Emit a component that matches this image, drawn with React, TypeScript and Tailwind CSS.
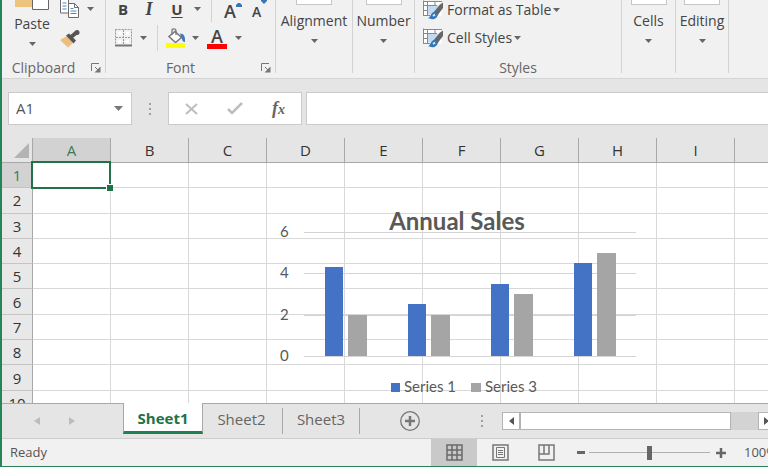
import React, { useState } from 'react';

const COLUMNS = ['A', 'B', 'C', 'D', 'E', 'F', 'G', 'H', 'I', 'J', 'K', 'L'];
const ROWS = [1, 2, 3, 4, 5, 6, 7, 8, 9, 10];

const SALES = [
  { first: 4.3, third: 2 },
  { first: 2.5, third: 2 },
  { first: 3.5, third: 3 },
  { first: 4.5, third: 5 },
];

const Caret: React.FC<{ className?: string }> = ({ className = '' }) => (
  <svg className={`shrink-0 ${className}`} width="7" height="4" viewBox="0 0 7 4" fill="#666">
    <path d="M0 0h7L3.5 4z" />
  </svg>
);

const PasteIcon = () => (
  <svg width="36" height="10" viewBox="0 0 36 10">
    <path d="M1 0h17v7H1z" fill="#ecc47e" />
    <path d="M18.5-2h16V9.5h-16z" fill="#fff" stroke="#666" />
  </svg>
);

const CopyIcon = () => (
  <svg width="19" height="18" viewBox="0 0 19 18" fill="#fff" stroke="#6b6b6b">
    <path d="M.5-2h8v15h-8z" />
    <path d="M2.5 3h4M2.5 6h4M2.5 9h4" stroke="#4a86c8" />
    <path d="M8.500 3.500h6l4 4v10h-10z" />
    <path d="M14.500 3.500v4h4" fill="none" />
    <path d="M10.500 8.500h3M10.500 11h6M10.500 13.500h6" stroke="#4a86c8" />
  </svg>
);

const PainterIcon = () => (
  <svg width="20" height="18" viewBox="0 0 20 18">
    <path d="M0 10 7 6l6 7-5 4.500z" fill="#ecbf7c" />
    <path d="m6 5.500 3-2 7 7-2.500 3z" fill="#555" />
    <path d="m11 7 5.500-4.500" stroke="#555" strokeWidth="4" />
    <circle cx="17" cy="2.500" r="2.500" fill="#555" />
  </svg>
);

const LauncherIcon = () => (
  <svg width="10" height="10" viewBox="0 0 10 10" fill="none" stroke="#777">
    <path d="M.5 8V.5H8" />
    <path d="m4 4 4 4" />
    <path d="M9.500 3.500v6h-6z" fill="#777" stroke="none" />
  </svg>
);

const BordersIcon = () => (
  <svg width="17" height="18" viewBox="0 0 17 18" fill="none" stroke="#999">
    <path d="M.5.5h16v15M.5.5v15M8.500 1v15M1 8.500h15" strokeDasharray="2 1" />
    <path d="M3 3h3v3H3zM11 3h3v3h-3zM3 11h3v3H3zM11 11h3v3h-3z" fill="#fff" stroke="none" />
    <path d="M0 16.500h17" stroke="#777" strokeWidth="2" />
  </svg>
);

const FillIcon = () => (
  <svg width="20" height="20" viewBox="0 0 20 20" fill="none">
    <path d="m9 3.500 6.500 6-6 5-6.500-6z" fill="#fff" stroke="#777" strokeWidth="1.500" />
    <path d="M6 7V2.500Q6 .8 7.800.8T10 2.500V7" stroke="#777" strokeWidth="1.300" />
    <path d="M14 5.500c4 0 5.500 3 5 8.500-1.500 0-3-1-3-3z" fill="#3d7ab8" />
    <path d="M0 15h19v5H0z" fill="#ff0" />
  </svg>
);

const StylesIcon = () => (
  <svg width="20" height="20" viewBox="0 0 20 20" fill="none">
    <path d="M.5 1.500h18v14H.5z" fill="#fff" />
    <path d="M5 5.500h11v9H5z" fill="#c3daf0" />
    <path d="M.5.500v15.500M4.500 1v15M12 1v5M0 1.500h19M0 5.500h14M0 10.500h5M0 15.500h7" stroke="#888" />
    <path d="m10 13 7-8.500 3-2V8l-6 8z" fill="#666" />
    <path d="M5 18c3 0 2-6 7-6 3 1 3.500 4 1 6-2 1.700-6 1.500-8 0z" fill="#3576b7" />
    <path d="m10 16 2-1.500" stroke="#d8e8f6" strokeWidth="2" />
  </svg>
);

const Group: React.FC<{ label?: string; launcher?: boolean; width: string; children: React.ReactNode }> = ({
  label,
  launcher,
  width,
  children,
}) => (
  <>
    <section className={`flex shrink-0 flex-col ${width}`}>
      <div className="h-[60px]">{children}</div>
      {label && (
        <div className="flex items-center text-sm leading-4 text-[#666]">
          <span className={`flex-1 text-center ${launcher ? 'pr-1.5' : ''}`}>{label}</span>
          {launcher && (
            <button className="mr-1" aria-label={`${label} settings`}>
              <LauncherIcon />
            </button>
          )}
        </div>
      )}
    </section>
    <div className="h-[73px] w-px shrink-0 bg-[#d2d2d2]" />
  </>
);

const CollapsedGroup: React.FC<{ label: string; width: string }> = ({ label, width }) => (
  <Group width={width}>
    <button className="flex w-full flex-col items-center">
      <span className="h-[5px] w-9 border border-t-0 border-[#c6c6c6] bg-white" />
      <span className="mt-2 leading-4">{label}</span>
      <Caret className="mt-2.5" />
    </button>
  </Group>
);

const Ribbon = () => (
  <header className="flex h-[79px] shrink-0 overflow-hidden border-b border-[#d4d4d4] bg-[#f1f1f1] text-sm">
    <Group label="Clipboard" launcher width="w-[103px]">
      <div className="flex">
        <button className="ml-2 flex w-11 flex-col items-center">
          <PasteIcon />
          <span className="mt-1.5 leading-4">Paste</span>
          <Caret className="mt-2.5" />
        </button>
        <div className="ml-1.5 flex flex-col gap-3">
          <button className="flex items-center gap-2" aria-label="Copy">
            <CopyIcon />
            <Caret />
          </button>
          <button aria-label="Format Painter">
            <PainterIcon />
          </button>
        </div>
      </div>
    </Group>
    <Group label="Font" launcher width="w-[169px]">
      <div className="flex h-[22px] items-center pl-2">
        <button className="w-[18px] pb-1 text-[15px] font-bold leading-4">B</button>
        <button className="ml-2 w-[18px] pb-1 font-['Liberation_Serif',serif] text-lg font-bold italic leading-4">I</button>
        <button className="ml-2.5 w-[18px] pb-1 text-[15px] font-bold leading-4 underline underline-offset-2">U</button>
        <Caret className="mb-1 ml-2" />
        <div className="ml-2.5 h-[22px] w-px bg-[#d2d2d2]" />
        <button className="ml-3 flex" aria-label="Increase font size">
          <span className="text-lg font-semibold leading-4">A</span>
          <svg width="6" height="4" viewBox="0 0 6 4" fill="#3576b7">
            <path d="M0 4V2l3-3 3 3v2z" />
          </svg>
        </button>
        <button className="ml-2.5 flex" aria-label="Decrease font size">
          <span className="pt-0.5 text-sm font-semibold leading-5">A</span>
          <svg width="6" height="4" viewBox="0 0 6 4" fill="#3576b7">
            <path d="M0 0h6v1L3 4 0 1z" />
          </svg>
        </button>
      </div>
      <div className="flex h-[30px] items-center pl-[9px] pt-0.5">
        <button className="flex items-center gap-2" aria-label="Borders">
          <BordersIcon />
          <Caret />
        </button>
        <div className="ml-2.5 h-[26px] w-px bg-[#d2d2d2]" />
        <button className="ml-2 flex items-center gap-1.5" aria-label="Fill color">
          <FillIcon />
          <Caret />
        </button>
        <button className="ml-2 flex items-center gap-2" aria-label="Font color">
          <span className="w-5 border-b-[5px] border-[#f00] text-center text-lg font-semibold leading-4">A</span>
          <Caret />
        </button>
      </div>
    </Group>
    <CollapsedGroup label="Alignment" width="w-[76px]" />
    <CollapsedGroup label="Number" width="w-[61px]" />
    <Group label="Styles" width="w-[206px]">
      <div className="flex flex-col items-start gap-2 pl-2">
        <button className="flex h-5 items-center">
          <StylesIcon />
          <span className="ml-1 mr-0.5">Format as Table</span>
          <Caret />
        </button>
        <button className="flex h-5 items-center">
          <StylesIcon />
          <span className="ml-1 mr-0.5">Cell Styles</span>
          <Caret />
        </button>
      </div>
    </Group>
    <CollapsedGroup label="Cells" width="w-[53px]" />
    <CollapsedGroup label="Editing" width="w-[52px]" />
  </header>
);

const Dots = () => (
  <svg width="2" height="12" viewBox="0 0 2 12" fill="#a0a0a0">
    <path d="M0 0h2v2H0zM0 5h2v2H0zM0 10h2v2H0z" />
  </svg>
);

const FormulaBar = () => {
  const [formula, setFormula] = useState('');
  return (
    <div className="flex h-[59px] shrink-0 pt-[13px]">
      <div className="ml-1.5 flex h-[33px] w-[124px] items-center border border-[#cacaca] bg-white pr-2">
        <input
          aria-label="Name box"
          defaultValue="A1"
          className="w-full min-w-0 bg-transparent pl-[7px] text-[15px] text-[#555] outline-none"
        />
        <button aria-label="Named ranges">
          <svg width="9" height="5" viewBox="0 0 9 5" fill="#777">
            <path d="M0 0h9L4.500 5z" />
          </svg>
        </button>
      </div>
      <div className="flex h-[33px] w-9 items-center justify-center">
        <Dots />
      </div>
      <div className="flex h-[33px] w-[134px] items-center justify-between border border-[#cacaca] bg-white px-4">
        <button aria-label="Cancel">
          <svg width="13" height="12" viewBox="0 0 13 12" fill="none" stroke="#bdbdbd" strokeWidth="2">
            <path d="m1 1 11 10M12 1 1 11" />
          </svg>
        </button>
        <button aria-label="Enter">
          <svg width="16" height="13" viewBox="0 0 16 13" fill="none" stroke="#bdbdbd" strokeWidth="2.500">
            <path d="m1 7 4 4L15 1" />
          </svg>
        </button>
        <button
          aria-label="Insert function"
          className="font-['Liberation_Serif',serif] text-lg font-bold italic leading-5 text-[#666]"
        >
          f<span className="text-sm">x</span>
        </button>
      </div>
      <input
        aria-label="Formula bar"
        value={formula}
        onChange={(e) => setFormula(e.target.value)}
        className="ml-1 h-[33px] min-w-0 flex-1 border border-r-0 border-[#cacaca] bg-white px-2 text-[15px] outline-none"
      />
    </div>
  );
};

const SalesChart = () => {
  const baseline = 148;
  const scale = (value: number) => Math.round((value * 124) / 6);
  return (
    <svg
      className="absolute left-[276px] top-[70px] fill-[#595959] font-['Lato','Open_Sans',sans-serif]"
      width="364"
      height="192"
      viewBox="0 0 364 192"
      role="img"
      aria-label="Annual Sales"
    >
      {[0, 2, 4, 6].map((tick) => (
        <g key={tick}>
          <path d={`M26 ${baseline - scale(tick) + 0.5}h332`} stroke="#d4d4d4" />
          <text x="2" y={baseline - scale(tick) + 5} className="text-[15px]">
            {tick}
          </text>
        </g>
      ))}
      {SALES.map(({ first, third }, i) => (
        <g key={i}>
          <rect x={47 + i * 83} y={baseline - scale(first)} width="18" height={scale(first)} fill="#4472c4" />
          <rect x={70 + i * 83} y={baseline - scale(third)} width="19" height={scale(third)} fill="#a5a5a5" />
        </g>
      ))}
      <text x="179" y="22" textAnchor="middle" className="text-2xl font-bold">
        Annual Sales
      </text>
      <path d="M113 175h9v9h-9z" fill="#4472c4" />
      <text x="126" y="184" className="text-[15px]">
        Series 1
      </text>
      <path d="M193 175h10v9h-10z" fill="#a5a5a5" />
      <text x="207" y="184" className="text-[15px]">
        Series 3
      </text>
    </svg>
  );
};

const Sheet = () => (
  <main className="relative min-h-0 flex-1 overflow-hidden bg-white">
    <table className="h-[278px] w-[966px] table-fixed border-separate border-spacing-0 text-[15px] leading-5 text-[#333]">
      <colgroup>
        <col className="w-[31px]" />
        {COLUMNS.map((c) => (
          <col key={c} className="w-[78px]" />
        ))}
      </colgroup>
      <thead>
        <tr className="h-[25px]">
          <th className="h-[25px] border-b border-r border-[#a8a8a8] bg-[#e5e5e5] p-0">
            <svg className="ml-3" width="15" height="15" viewBox="0 0 15 15" fill="#b4b4b4">
              <path d="M15 0v15H0z" />
            </svg>
          </th>
          {COLUMNS.map((c) => (
            <th
              key={c}
              className={`border-b border-r border-[#a8a8a8] p-0 font-medium ${
                c === 'A' ? 'bg-[#d2d2d2] text-[#3c7a57]' : 'bg-[#e5e5e5]'
              }`}
            >
              {c}
            </th>
          ))}
        </tr>
      </thead>
      <tbody>
        {ROWS.map((r) => (
          <tr key={r}>
            <th
              className={`border-b border-r border-b-[#c4c4c4] border-r-[#a8a8a8] p-0 font-medium ${
                r === 1 ? 'bg-[#d2d2d2] text-[#3c7a57]' : 'bg-[#e8e8e8]'
              }`}
            >
              {r}
            </th>
            {COLUMNS.map((c) => (
              <td key={c} className="border-b border-r border-[#d8d8d8] p-0" />
            ))}
          </tr>
        ))}
      </tbody>
    </table>
    <div className="absolute left-[29px] top-[23px] h-[28px] w-[80px] border-2 border-[#217346]">
      <span className="absolute -bottom-1 -right-1 size-[7px] border-l border-t border-white bg-[#217346]" />
    </div>
    <SalesChart />
  </main>
);

const SheetTabs = () => (
  <nav className="flex h-[36px] shrink-0 items-start border-b border-[#cdcdcd] text-[15px] text-[#666]">
    <div className="flex h-[35px] w-[121px] items-center gap-[29px] border-t border-[#a8a8a8] pl-8">
      <button aria-label="Previous sheet">
        <svg width="6" height="8" viewBox="0 0 6 8" fill="#bcbcbc">
          <path d="M6 0v8L0 4z" />
        </svg>
      </button>
      <button aria-label="Next sheet">
        <svg width="6" height="8" viewBox="0 0 6 8" fill="#bcbcbc">
          <path d="M0 0v8l6-4z" />
        </svg>
      </button>
    </div>
    <button className="h-[31px] w-20 border-x border-b-[3px] border-x-[#a8a8a8] border-b-[#1f8050] bg-white pt-0.5 font-bold text-[#217346]">
      Sheet1
    </button>
    <div className="flex h-[35px] min-w-0 flex-1 items-center border-t border-[#a8a8a8]">
      <button className="h-[26px] w-20 border-r border-[#a8a8a8] pb-1 pr-0.5">Sheet2</button>
      <button className="h-[26px] w-[77px] border-r border-[#a8a8a8] pb-1">Sheet3</button>
      <button aria-label="New sheet" className="ml-10">
        <svg width="20" height="20" viewBox="0 0 20 20" fill="none" stroke="#777">
          <circle cx="10" cy="10" r="9.300" strokeWidth="1.300" />
          <path d="M10 5v10M5 10h10" strokeWidth="2.500" />
        </svg>
      </button>
      <div className="min-w-4 flex-1" />
      <Dots />
      <div className="ml-[19px] flex h-[18px] w-[266px] shrink-0 bg-[#d3d3d3]">
        <button aria-label="Scroll left" className="flex w-[18px] items-center justify-center border border-[#b4b4b4] bg-white">
          <svg width="5" height="8" viewBox="0 0 5 8" fill="#555">
            <path d="M5 0v8L0 4z" />
          </svg>
        </button>
        <div className="w-[211px] border border-[#b4b4b4] bg-white" />
        <div className="flex-1" />
        <button aria-label="Scroll right" className="flex w-[10px] items-center justify-end border border-r-0 border-[#b4b4b4] bg-white">
          <svg width="4" height="8" viewBox="0 0 4 8" fill="#555">
            <path d="M0 0v8l5-4z" />
          </svg>
        </button>
      </div>
    </div>
  </nav>
);

const StatusBar = () => {
  const [zoom, setZoom] = useState(50);
  return (
    <footer className="flex h-[27px] shrink-0 items-center overflow-hidden bg-[#f1f1f1] text-[13px] text-[#555]">
      <span className="flex-1 pl-2">Ready</span>
      <button aria-label="Normal view" className="flex h-full w-[46px] items-center justify-center bg-[#c9c9c9]">
        <svg width="17" height="17" viewBox="0 0 17 17" fill="none" stroke="#6a6a6a">
          <path d="M1 1h15v15H1zM6 1v15M11 1v15M1 6h15M1 11h15" strokeWidth="1.500" />
        </svg>
      </button>
      <button aria-label="Page layout" className="flex h-full w-[46px] items-center justify-center">
        <svg width="17" height="17" viewBox="0 0 17 17" fill="none" stroke="#777">
          <path d="M1 1h15v15H1z" strokeWidth="1.500" />
          <path d="M4.500 3.500h8v10h-8zM6 6.500h5M6 8.500h5M6 10.500h5" />
        </svg>
      </button>
      <button aria-label="Page break preview" className="flex h-full w-[46px] items-center justify-center">
        <svg width="17" height="17" viewBox="0 0 17 17" fill="none" stroke="#777" strokeWidth="1.500">
          <path d="M1 1h15v15H1zM6 1v9M1 10h10V1" />
        </svg>
      </button>
      <button aria-label="Zoom out" className="ml-2">
        <svg width="8" height="3" viewBox="0 0 8 3" fill="#666">
          <path d="M0 0h8v3H0z" />
        </svg>
      </button>
      <input
        type="range"
        aria-label="Zoom"
        value={zoom}
        onChange={(e) => setZoom(Number(e.target.value))}
        className="ml-1 h-[14px] w-[121px] appearance-none bg-[linear-gradient(#b0b0b0,#b0b0b0)] bg-[length:100%_1px] bg-center bg-no-repeat [&::-webkit-slider-thumb]:h-[14px] [&::-webkit-slider-thumb]:w-[5px] [&::-webkit-slider-thumb]:appearance-none [&::-webkit-slider-thumb]:bg-[#666]"
      />
      <button aria-label="Zoom in" className="ml-1.5">
        <svg width="10" height="10" viewBox="0 0 10 10" fill="none" stroke="#666" strokeWidth="2.500">
          <path d="M5 0v10M0 5h10" />
        </svg>
      </button>
      <span className="ml-[18px] w-6 overflow-hidden whitespace-nowrap">100%</span>
    </footer>
  );
};

export default function App() {
  return (
    <div className="flex h-screen w-full flex-col overflow-hidden border-b border-l-2 border-[#258558] bg-[#e5e5e5] font-['Open_Sans','Noto_Sans',sans-serif] text-[#444]">
      <Ribbon />
      <FormulaBar />
      <Sheet />
      <SheetTabs />
      <StatusBar />
    </div>
  );
}
